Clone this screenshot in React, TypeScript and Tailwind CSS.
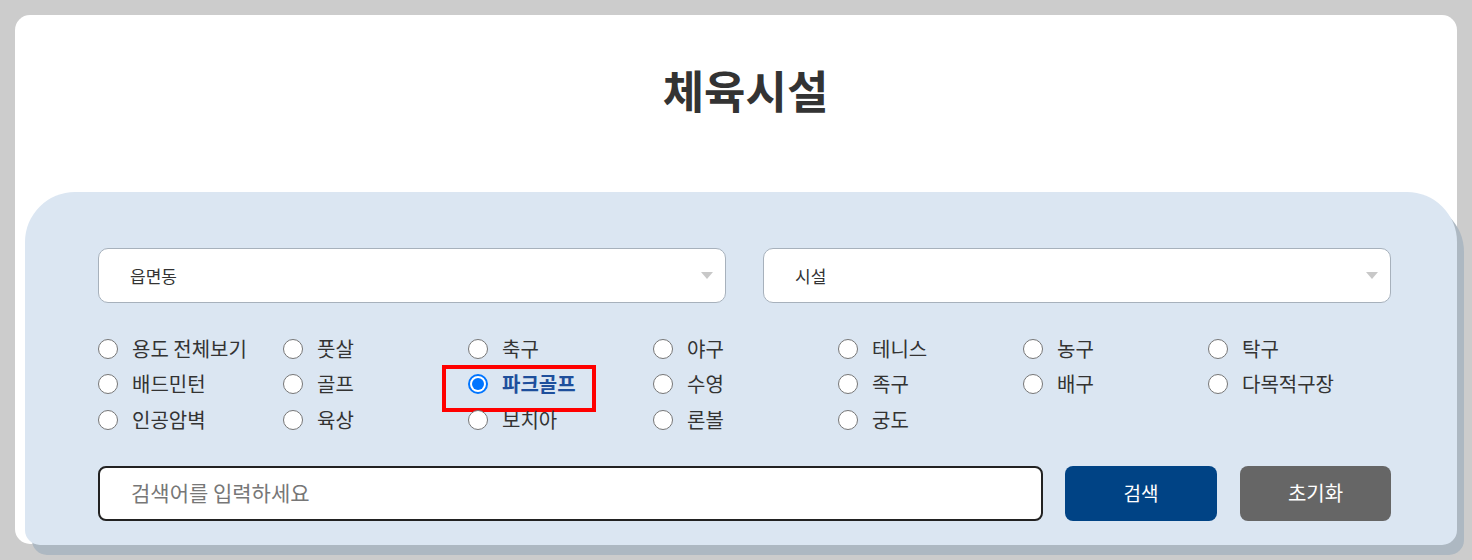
const rows = [
  ['용도 전체보기', '풋살', '축구', '야구', '테니스', '농구', '탁구'],
  ['배드민턴', '골프', '파크골프', '수영', '족구', '배구', '다목적구장'],
  ['인공암벽', '육상', '보치아', '론볼', '궁도'],
];

function Radio({ checked }: { checked: boolean }) {
  return checked ? (
    <span className="flex h-[20px] w-[20px] shrink-0 items-center justify-center rounded-full border-2 border-[#0075ff] bg-white">
      <span className="h-[12px] w-[12px] rounded-full bg-[#0075ff]" />
    </span>
  ) : (
    <span className="h-[20px] w-[20px] shrink-0 rounded-full border border-[#767676] bg-white" />
  );
}

function SelectBox({ label }: { label: string }) {
  return (
    <div className="flex h-[55px] w-[628px] items-center justify-between rounded-[10px] border border-[#a7b1bc] bg-white pl-[31px] pr-[12px]">
      <span className="text-[17px] text-[#333]">{label}</span>
      <span className="h-0 w-0 border-x-[6px] border-t-[7px] border-x-transparent border-t-[#c8c8c8]" />
    </div>
  );
}

export default function App() {
  const selected = '파크골프';

  return (
    <div
      className="h-[560px] overflow-hidden bg-[#cccccc] px-[15px] pt-[15px]"
      style={{ fontFamily: '"Noto Sans CJK KR", "Noto Sans", sans-serif' }}
    >
      <div className="h-[529px] w-[1442px] rounded-[15px] bg-white">
        <div className="flex h-[177px] justify-center pl-[19px] pt-[46px]">
          <h1 className="text-[45px] font-bold leading-[58px] text-[#333]">체육시설</h1>
        </div>

        <div className="ml-[10px] h-[353px] w-[1432px] rounded-t-[50px] rounded-b-[15px] bg-[#dbe6f2] pl-[73px] pr-[66px] pt-[56px] shadow-[7px_10px_0_0_#adb8c2]">
          <div className="flex gap-[37px]">
            <SelectBox label="읍면동" />
            <SelectBox label="시설" />
          </div>

          <div className="mt-[28px] flex flex-col">
            {rows.map((row, i) => (
              <div key={i} className="grid h-[35.5px] grid-cols-[repeat(7,185px)]">
                {row.map((name) => {
                  const on = name === selected;
                  return (
                    <label key={name} className="relative flex items-center gap-[14px]">
                      <Radio checked={on} />
                      <span
                        className={
                          on
                            ? 'whitespace-nowrap text-[20px] font-bold text-[#1e4f9c]'
                            : 'whitespace-nowrap text-[20px] text-[#333]'
                        }
                      >
                        {name}
                      </span>
                      {on && (
                        <span className="absolute left-[-26px] top-[-2px] h-[47px] w-[154px] border-[4px] border-[#ff0000]" />
                      )}
                    </label>
                  );
                })}
              </div>
            ))}
          </div>

          <div className="mt-[28px] flex items-center">
            <div className="flex h-[55px] w-[945px] items-center rounded-[8px] border-2 border-[#222] bg-white pl-[31px]">
              <span className="text-[21px] text-[#777]">검색어를 입력하세요</span>
            </div>
            <button className="ml-[22px] h-[55px] w-[152px] rounded-[8px] bg-[#004385] text-[19px] text-white">
              검색
            </button>
            <button className="ml-[23px] h-[55px] w-[151px] rounded-[8px] bg-[#666666] text-[20px] text-white">
              초기화
            </button>
          </div>
        </div>
      </div>
    </div>
  );
}
